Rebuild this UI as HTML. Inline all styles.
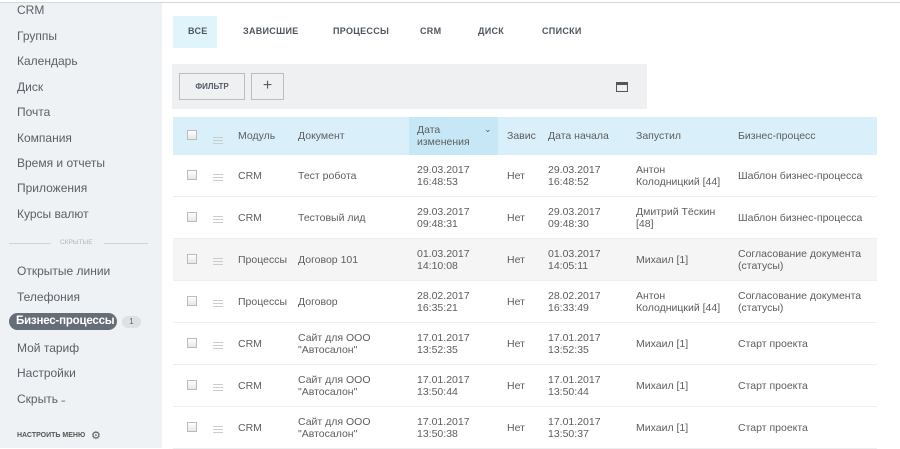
<!DOCTYPE html>
<html><head><meta charset="utf-8"><style>
*{margin:0;padding:0;box-sizing:border-box}
body{width:900px;height:448px;overflow:hidden;background:#fff;font-family:"Liberation Sans","Noto Sans CJK SC",sans-serif;position:relative;color:#535c69}
#sb{position:absolute;left:0;top:0;width:162px;height:448px;background:#eef2f4}
#topline{position:absolute;left:0;top:0;width:900px;height:3px;background:#fff;border-bottom:1px solid #d5d8db}
.si{position:absolute;left:17px;font-size:12px;color:#5b6068;line-height:14px;white-space:nowrap}
.a{position:absolute;font-size:11px;white-space:nowrap}
.tab{position:absolute;top:26px;font-size:9px;font-weight:bold;color:#4e5561;letter-spacing:.3px}
.row{position:absolute;left:173px;width:704px;height:42px;border-bottom:1px solid #eceeef}
.c{position:absolute;font-size:10.5px;color:#5d5d5d;line-height:12px;white-space:nowrap}
.cb{position:absolute;left:14px;top:15px;width:10px;height:10px;border:1px solid #b8bcc0;background:linear-gradient(#fff,#e6e6e6)}
.dr{position:absolute;left:40px;top:19px;width:10px;height:7px;border-top:1px solid #ccc;border-bottom:1px solid #ccc}
.dr:after{content:"";position:absolute;left:0;top:2px;width:10px;height:1px;background:#ccc}
</style></head><body>
<div id="sb"></div>
<div id="topline"></div>
<div class="si" style="top:3px">CRM</div>
<div class="si" style="top:29px">Группы</div>
<div class="si" style="top:54px">Календарь</div>
<div class="si" style="top:80px">Диск</div>
<div class="si" style="top:105px">Почта</div>
<div class="si" style="top:131px">Компания</div>
<div class="si" style="top:156px">Время и отчеты</div>
<div class="si" style="top:181px">Приложения</div>
<div class="si" style="top:207px">Курсы валют</div>
<div style="position:absolute;left:9px;top:243px;width:42px;height:1px;background:#d0d4d8"></div>
<div style="position:absolute;left:104px;top:243px;width:44px;height:1px;background:#d0d4d8"></div>
<div class="a" style="left:60px;top:239px;font-size:6.5px;color:#b0b5ba">СКРЫТЫЕ</div>
<div class="si" style="top:264px">Открытые линии</div>
<div class="si" style="top:290px">Телефония</div>
<div style="position:absolute;left:9px;top:313px;width:108px;height:17px;border-radius:9px;background:#656d77;color:#fff;font-size:11.5px;font-weight:bold;padding:2px 0 0 7px;white-space:nowrap;letter-spacing:-0.2px">Бизнес-процессы</div>
<div style="position:absolute;left:122px;top:316px;width:19px;height:12px;border-radius:6px;background:#dde1e4;color:#666;font-size:8px;text-align:center;line-height:12px">1</div>
<div class="si" style="top:341px">Мой тариф</div>
<div class="si" style="top:366px">Настройки</div>
<div class="si" style="top:392px">Скрыть ˗</div>
<div class="a" style="left:17px;top:432px;font-size:7px;font-weight:bold;color:#555">НАСТРОИТЬ МЕНЮ</div>
<div class="a" style="left:91px;top:429px;font-size:11px;color:#555">⚙</div>

<div style="position:absolute;left:173px;top:16px;width:44px;height:32px;background:#e0f4fb"></div>
<div class="tab" style="left:188px">ВСЕ</div>
<div class="tab" style="left:243px">ЗАВИСШИЕ</div>
<div class="tab" style="left:333px">ПРОЦЕССЫ</div>
<div class="tab" style="left:420px">CRM</div>
<div class="tab" style="left:478px">ДИСК</div>
<div class="tab" style="left:542px">СПИСКИ</div>

<div style="position:absolute;left:172px;top:64px;width:475px;height:45px;background:#eef0f1"></div>
<div style="position:absolute;left:179px;top:73px;width:66px;height:27px;border:1px solid #b9bec3;background:#eef0f1;font-size:8px;font-weight:bold;color:#535c69;text-align:center;line-height:25px">ФИЛЬТР</div>
<div style="position:absolute;left:251px;top:73px;width:33px;height:27px;border:1px solid #b9bec3;font-size:16px;color:#535c69;text-align:center;line-height:24px">+</div>
<div style="position:absolute;left:616px;top:82px;width:12px;height:10px;border:1.5px solid #555;border-top-width:3px"></div>

<div style="position:absolute;left:173px;top:117px;width:704px;height:38px;background:#d9f0fa"></div>
<div style="position:absolute;left:409px;top:117px;width:89px;height:38px;background:#c6e8f6"></div>
<div class="row" style="top:117px;height:38px;border:none">
<div class="cb" style="top:13px"></div><div class="dr" style="top:20px"></div>
<div class="c" style="left:65px;top:13px">Модуль</div>
<div class="c" style="left:125px;top:13px">Документ</div>
<div class="c" style="left:244px;top:7px">Дата<br>изменения</div>
<div class="c" style="left:311px;top:6px;font-size:9px">⌄</div>
<div class="c" style="left:334px;top:13px">Завис</div>
<div class="c" style="left:375px;top:13px">Дата начала</div>
<div class="c" style="left:463px;top:13px">Запустил</div>
<div class="c" style="left:565px;top:13px">Бизнес-процесс</div>
</div>

<div class="row" style="top:155px"><div class="cb"></div><div class="dr"></div>
<div class="c" style="left:65px;top:15px">CRM</div><div class="c" style="left:125px;top:15px">Тест робота</div>
<div class="c" style="left:244px;top:9px">29.03.2017<br>16:48:53</div><div class="c" style="left:334px;top:15px">Нет</div>
<div class="c" style="left:375px;top:9px">29.03.2017<br>16:48:52</div><div class="c" style="left:463px;top:9px">Антон<br>Колодницкий [44]</div>
<div class="c" style="left:565px;top:15px">Шаблон бизнес-процесса</div></div>

<div class="row" style="top:197px"><div class="cb"></div><div class="dr"></div>
<div class="c" style="left:65px;top:15px">CRM</div><div class="c" style="left:125px;top:15px">Тестовый лид</div>
<div class="c" style="left:244px;top:9px">29.03.2017<br>09:48:31</div><div class="c" style="left:334px;top:15px">Нет</div>
<div class="c" style="left:375px;top:9px">29.03.2017<br>09:48:30</div><div class="c" style="left:463px;top:9px">Дмитрий Тёскин<br>[48]</div>
<div class="c" style="left:565px;top:15px">Шаблон бизнес-процесса</div></div>

<div class="row" style="top:239px;background:#f5f5f5"><div class="cb"></div><div class="dr"></div>
<div class="c" style="left:65px;top:15px">Процессы</div><div class="c" style="left:125px;top:15px">Договор 101</div>
<div class="c" style="left:244px;top:9px">01.03.2017<br>14:10:08</div><div class="c" style="left:334px;top:15px">Нет</div>
<div class="c" style="left:375px;top:9px">01.03.2017<br>14:05:11</div><div class="c" style="left:463px;top:15px">Михаил [1]</div>
<div class="c" style="left:565px;top:9px">Согласование документа<br>(статусы)</div></div>

<div class="row" style="top:281px"><div class="cb"></div><div class="dr"></div>
<div class="c" style="left:65px;top:15px">Процессы</div><div class="c" style="left:125px;top:15px">Договор</div>
<div class="c" style="left:244px;top:9px">28.02.2017<br>16:35:21</div><div class="c" style="left:334px;top:15px">Нет</div>
<div class="c" style="left:375px;top:9px">28.02.2017<br>16:33:49</div><div class="c" style="left:463px;top:9px">Антон<br>Колодницкий [44]</div>
<div class="c" style="left:565px;top:9px">Согласование документа<br>(статусы)</div></div>

<div class="row" style="top:323px"><div class="cb"></div><div class="dr"></div>
<div class="c" style="left:65px;top:15px">CRM</div><div class="c" style="left:125px;top:9px">Сайт для ООО<br>"Автосалон"</div>
<div class="c" style="left:244px;top:9px">17.01.2017<br>13:52:35</div><div class="c" style="left:334px;top:15px">Нет</div>
<div class="c" style="left:375px;top:9px">17.01.2017<br>13:52:35</div><div class="c" style="left:463px;top:15px">Михаил [1]</div>
<div class="c" style="left:565px;top:15px">Старт проекта</div></div>

<div class="row" style="top:365px"><div class="cb"></div><div class="dr"></div>
<div class="c" style="left:65px;top:15px">CRM</div><div class="c" style="left:125px;top:9px">Сайт для ООО<br>"Автосалон"</div>
<div class="c" style="left:244px;top:9px">17.01.2017<br>13:50:44</div><div class="c" style="left:334px;top:15px">Нет</div>
<div class="c" style="left:375px;top:9px">17.01.2017<br>13:50:44</div><div class="c" style="left:463px;top:15px">Михаил [1]</div>
<div class="c" style="left:565px;top:15px">Старт проекта</div></div>

<div class="row" style="top:407px"><div class="cb"></div><div class="dr"></div>
<div class="c" style="left:65px;top:15px">CRM</div><div class="c" style="left:125px;top:9px">Сайт для ООО<br>"Автосалон"</div>
<div class="c" style="left:244px;top:9px">17.01.2017<br>13:50:38</div><div class="c" style="left:334px;top:15px">Нет</div>
<div class="c" style="left:375px;top:9px">17.01.2017<br>13:50:37</div><div class="c" style="left:463px;top:15px">Михаил [1]</div>
<div class="c" style="left:565px;top:15px">Старт проекта</div></div>
</body></html>
